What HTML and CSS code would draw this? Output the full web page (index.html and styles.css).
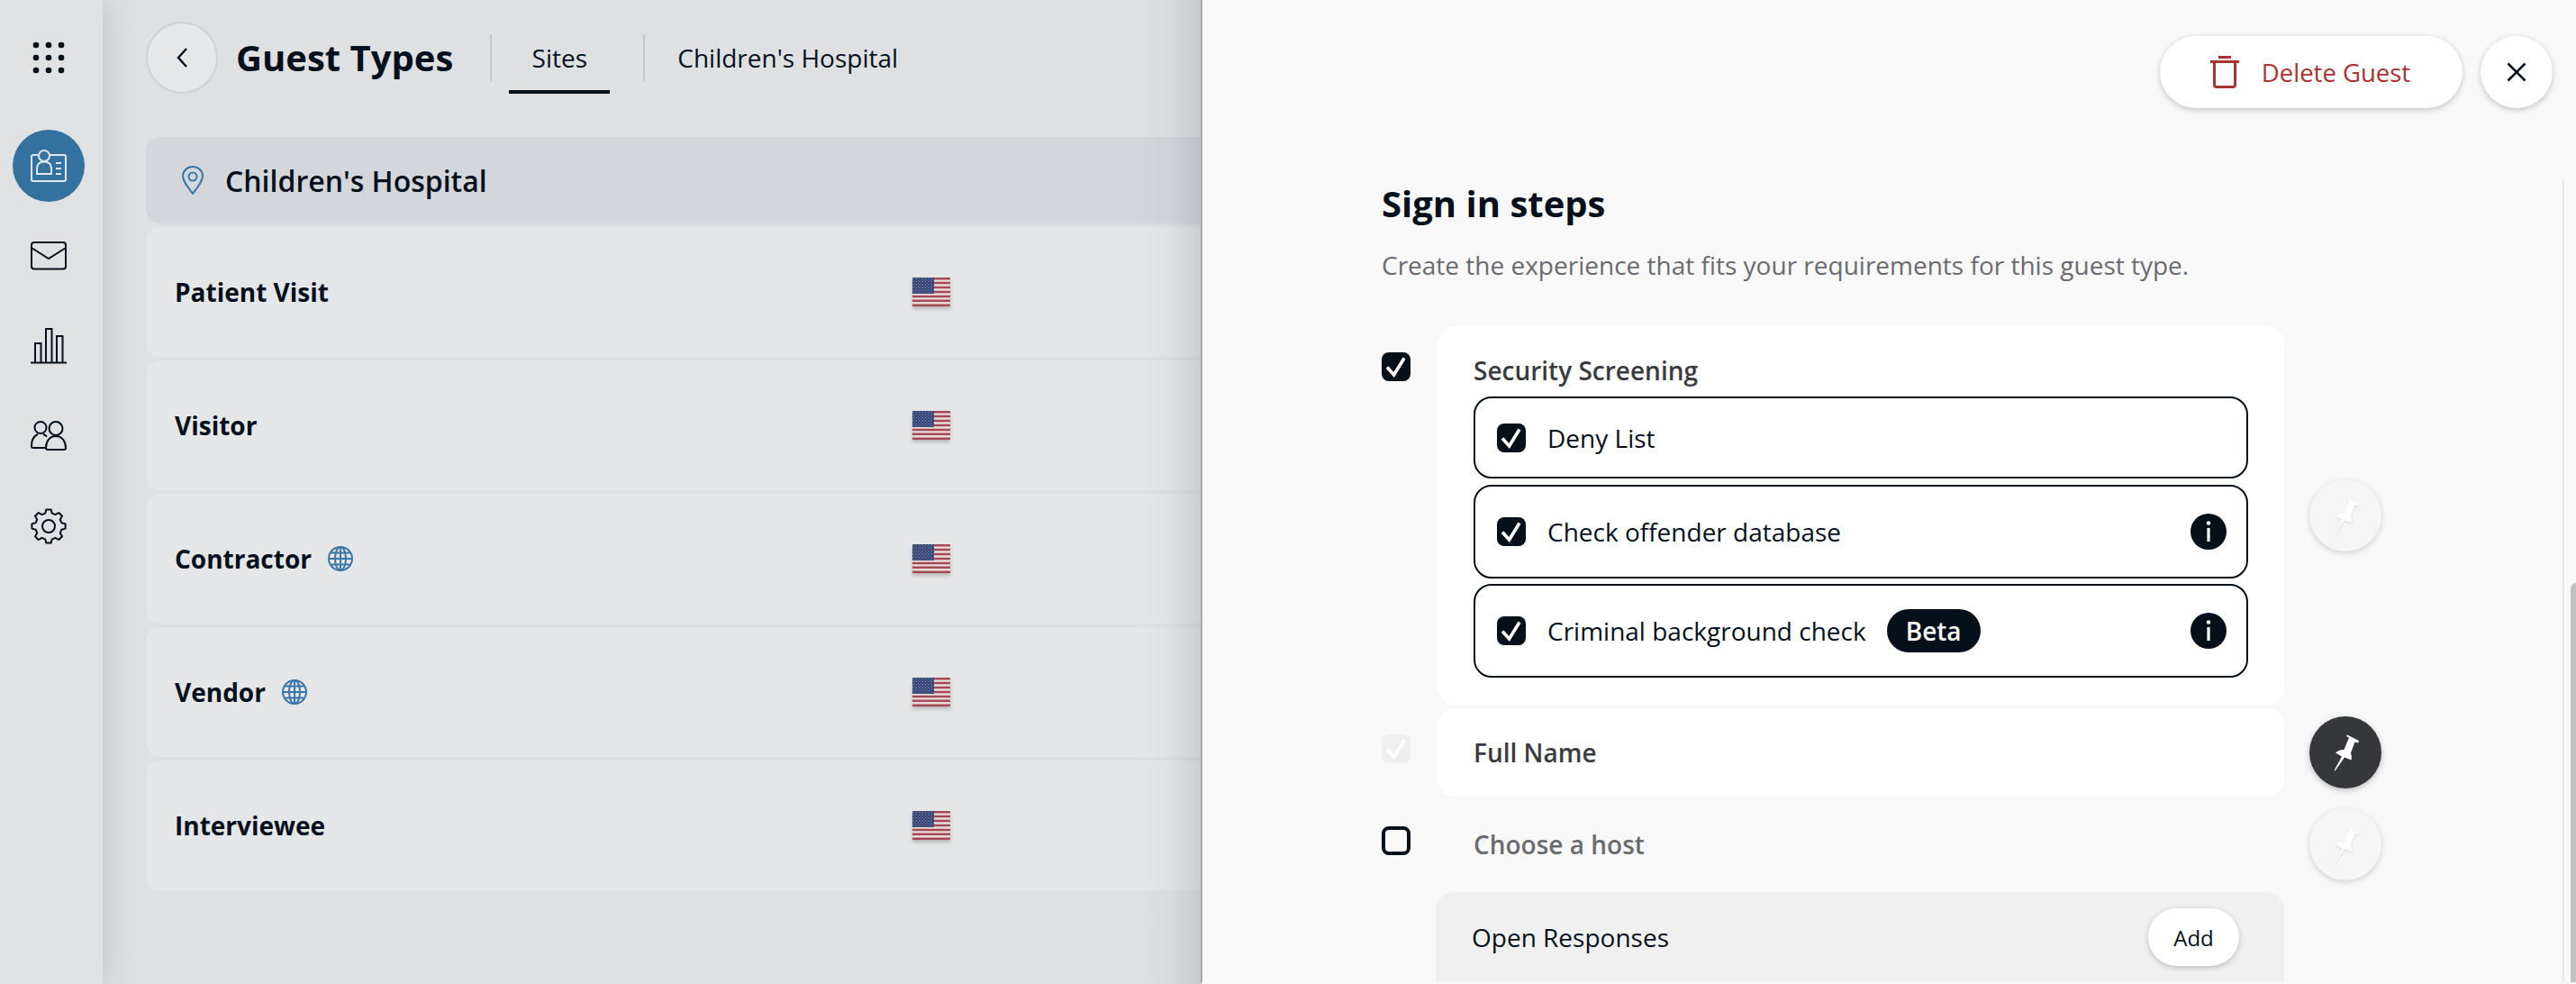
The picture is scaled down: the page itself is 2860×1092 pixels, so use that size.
FILE: index.html
```html
<!DOCTYPE html>
<html>
<head>
    <title>Guest Types</title>
    <link rel="stylesheet" href="styles.css">
</head>
<body>
    <svg class="defs" width="0" height="0">
        <defs>
            <pattern id="stars" width="3.4" height="3.4" patternUnits="userSpaceOnUse">
                <circle cx="1" cy="1" r="0.75" fill="#8f9ac0"/>
                <circle cx="2.7" cy="2.7" r="0.6" fill="#8f9ac0"/>
            </pattern>
            <symbol id="flag" viewBox="0 0 42 32">
                <rect width="42" height="32" fill="#ebdcdc"/>
                <path d="M0 1.2H42M0 6.1H42M0 11H42M0 16H42M0 20.9H42M0 25.8H42M0 30.7H42" stroke="#a44a54" stroke-width="2.5"/>
                <rect width="24" height="18" fill="#2b3a6b"/>
                <rect width="24" height="18" fill="url(#stars)"/>
            </symbol>
            <symbol id="globe" viewBox="0 0 28 28">
                <g fill="none" stroke="#3a76a6" stroke-width="2">
                    <circle cx="14" cy="14" r="13"/>
                    <ellipse cx="14" cy="14" rx="6" ry="13"/>
                    <path d="M14 1V27M1.5 14H26.5M3.5 7.5H24.5M3.5 20.5H24.5"/>
                </g>
            </symbol>
            <symbol id="check" viewBox="0 0 32 32">
                <path d="M6 16.5L13.6 25L25 6.5" fill="none" stroke="#fff" stroke-width="3.6"/>
            </symbol>
            <symbol id="pin" viewBox="0 0 80 80">
                <path d="M42 20.5L55 27L54 29.5L50.5 28.5L46 40.5Q47.5 44.5 46.500 48.500L39 45.500L28.500 60.500L27.600 60L36 44.500L29 40.500Q33 36.500 38.500 37L44 23.500L41 22Z"/>
            </symbol>
            <symbol id="info" viewBox="0 0 40 40">
                <circle cx="20" cy="20" r="20" fill="#06101a"/>
                <circle cx="20" cy="10.5" r="2.2" fill="#fff"/>
                <rect x="18.4" y="16" width="3.2" height="15" fill="#fff"/>
            </symbol>
        </defs>
    </svg>

    <div class="app">
        <nav class="sidebar">
            <div class="nav-item apps">
                <svg width="40" height="40" viewBox="0 0 40 40" fill="#06101a">
                    <circle cx="6" cy="6" r="3.3"/><circle cx="20" cy="6" r="3.3"/><circle cx="34" cy="6" r="3.3"/>
                    <circle cx="6" cy="20" r="3.3"/><circle cx="20" cy="20" r="3.3"/><circle cx="34" cy="20" r="3.3"/>
                    <circle cx="6" cy="34" r="3.3"/><circle cx="20" cy="34" r="3.3"/><circle cx="34" cy="34" r="3.3"/>
                </svg>
            </div>
            <div class="nav-item active">
                <svg width="40" height="40" viewBox="0 0 40 40" fill="none" stroke="#dfe6ec" stroke-width="2">
                    <path d="M8.5 8H3Q1 8 1 10V35Q1 37 3 37H37Q39 37 39 35V10Q39 8 37 8H21.5"/>
                    <circle cx="15" cy="9" r="6"/>
                    <path d="M7 29V23C7 18 10 15.5 15 15.5C20 15.5 23 18 23 23V29Z"/>
                    <path d="M28 17H34M28 23H34M28 29H34"/>
                </svg>
            </div>
            <div class="nav-item">
                <svg width="40" height="40" viewBox="0 0 40 40" fill="none" stroke="#06101a" stroke-width="2">
                    <rect x="1" y="5" width="38" height="29.5" rx="3"/>
                    <path d="M1 11L20 23L39 11"/>
                </svg>
            </div>
            <div class="nav-item">
                <svg width="40" height="40" viewBox="0 0 40 40" fill="none" stroke="#06101a" stroke-width="2">
                    <path d="M0 38.5H40"/>
                    <path d="M5 38V17H11.5V38M17 38V1H23.5V38M29 38V9H35.5V38"/>
                </svg>
            </div>
            <div class="nav-item">
                <svg width="40" height="40" viewBox="0 0 40 40" fill="none" stroke="#06101a" stroke-width="2">
                    <circle cx="11" cy="10.5" r="6.5"/>
                    <circle cx="28" cy="11.5" r="7.5"/>
                    <path d="M16 33H3Q1 33 1 31C1 25 3 20 8 18M14 18C15.5 18.5 17 19.5 18 20.5"/>
                    <path d="M19 35Q17 35 17 33C17 26 21 20 28 20C35 20 39 26 39 33Q39 35 37 35Z"/>
                </svg>
            </div>
            <div class="nav-item">
                <svg width="40" height="40" viewBox="0 0 40 40" fill="none" stroke="#06101a" stroke-width="2" stroke-linejoin="round">
                    <path d="M34.3 16.17L38.6 17.4V22.6L34.3 23.83L32.8 27.4L35 31.3L31.3 35L27.4 32.8L23.83 34.3L22.6 38.6H17.4L16.17 34.3L12.6 32.8L8.7 35L5 31.3L7.2 27.4L5.7 23.83L1.4 22.6V17.4L5.7 16.17L7.2 12.6L5 8.7L8.7 5L12.6 7.2L16.17 5.7L17.4 1.4H22.6L23.83 5.7L27.4 7.2L31.3 5L35 8.7L32.8 12.6Z"/>
                    <circle cx="20" cy="20" r="7"/>
                </svg>
            </div>
        </nav>

        <main class="main">
            <header class="topbar">
                <button class="back-btn">
                    <svg width="14" height="24" viewBox="0 0 14 24" fill="none" stroke="#06101a" stroke-width="2.4"><path d="M12 2L3 12L12 22"/></svg>
                </button>
                <h1 class="page-title">Guest Types</h1>
                <span class="divider"></span>
                <div class="tab">Sites</div>
                <span class="divider second"></span>
                <div class="crumb">Children's Hospital</div>
            </header>

            <section class="site-list">
                <div class="site-head">
                    <svg width="24" height="32" viewBox="0 0 24 32" fill="none" stroke="#3a76a6" stroke-width="2">
                        <path d="M12 31C6 23 1 17 1 11.5C1 5.5 6 1 12 1C18 1 23 5.5 23 11.5C23 17 18 23 12 31Z"/>
                        <circle cx="12" cy="12" r="4.5"/>
                    </svg>
                    <span>Children's Hospital</span>
                </div>
                <div class="guest-row">
                    <div class="guest-name">Patient Visit</div>
                    <svg class="flag"><use href="#flag"/></svg>
                </div>
                <div class="guest-row">
                    <div class="guest-name">Visitor</div>
                    <svg class="flag"><use href="#flag"/></svg>
                </div>
                <div class="guest-row">
                    <div class="guest-name">Contractor <svg class="globe"><use href="#globe"/></svg></div>
                    <svg class="flag"><use href="#flag"/></svg>
                </div>
                <div class="guest-row">
                    <div class="guest-name">Vendor <svg class="globe"><use href="#globe"/></svg></div>
                    <svg class="flag"><use href="#flag"/></svg>
                </div>
                <div class="guest-row">
                    <div class="guest-name">Interviewee</div>
                    <svg class="flag"><use href="#flag"/></svg>
                </div>
            </section>
        </main>

        <aside class="panel">
            <div class="panel-actions">
                <button class="delete-btn">
                    <svg width="32" height="36" viewBox="0 0 32 36" fill="none" stroke="#ab3232" stroke-width="3">
                        <path d="M9 1.5H23M0 6.5H32M4.5 6.5V32Q4.5 34.5 7 34.5H25Q27.5 34.5 27.5 32V6.5"/>
                    </svg>
                    Delete Guest
                </button>
                <button class="close-btn">
                    <svg width="22" height="22" viewBox="0 0 22 22" fill="none" stroke="#06101a" stroke-width="2.6"><path d="M1.5 1.5L20.5 20.5M20.5 1.5L1.5 20.5"/></svg>
                </button>
            </div>

            <div class="panel-body">
                <h2 class="steps-title">Sign in steps</h2>
                <p class="steps-desc">Create the experience that fits your requirements for this guest type.</p>

                <div class="step">
                    <span class="checkbox checked"><svg><use href="#check"/></svg></span>
                    <div class="step-card">
                        <div class="group-title">Security Screening</div>
                        <div class="option short">
                            <span class="checkbox checked"><svg><use href="#check"/></svg></span>
                            <span>Deny List</span>
                        </div>
                        <div class="option gap-a">
                            <span class="checkbox checked"><svg><use href="#check"/></svg></span>
                            <span>Check offender database</span>
                            <svg class="info"><use href="#info"/></svg>
                        </div>
                        <div class="option gap-b">
                            <span class="checkbox checked"><svg><use href="#check"/></svg></span>
                            <span>Criminal background check</span>
                            <span class="badge">Beta</span>
                            <svg class="info"><use href="#info"/></svg>
                        </div>
                    </div>
                    <button class="pin-btn"><svg><use href="#pin"/></svg></button>
                </div>

                <div class="step single">
                    <span class="checkbox disabled"><svg><use href="#check"/></svg></span>
                    <div class="step-card plain">Full Name</div>
                    <button class="pin-btn on"><svg><use href="#pin"/></svg></button>
                </div>

                <div class="step single">
                    <span class="checkbox"></span>
                    <div class="step-card plain off">Choose a host</div>
                    <button class="pin-btn"><svg><use href="#pin"/></svg></button>
                </div>

                <div class="open-card">
                    <span>Open Responses</span>
                    <button class="add-btn">Add</button>
                </div>
            </div>

            <div class="scrollbar"><div class="scroll-thumb"></div></div>
        </aside>
    </div>
</body>
</html>
```

FILE: styles.css
```css
* {
    box-sizing: border-box;
}
body {
    margin: 0;
    font-family: "Open Sans", "Noto Sans", sans-serif;
    color: #06101a;
    background: #dfe0e2;
}
button {
    font-family: inherit;
    border: none;
    padding: 0;
    cursor: pointer;
}
.defs {
    position: absolute;
}
.app {
    position: relative;
    display: flex;
    height: 100vh;
    overflow: hidden;
}

/* left rail */
.sidebar {
    position: relative;
    z-index: 1;
    flex: none;
    width: 114px;
    padding: 24px 6px 0 0;
    display: flex;
    flex-direction: column;
    align-items: center;
    gap: 20px;
    background: #dfe1e3;
    box-shadow: 0 0 36px rgba(60, 70, 85, 0.22);
}
.nav-item {
    width: 80px;
    height: 80px;
    border-radius: 50%;
    display: flex;
    align-items: center;
    justify-content: center;
}
.nav-item.apps {
    margin-bottom: 20px;
}
.nav-item.active {
    background: #33729f;
}

/* page behind the panel */
.main {
    flex: 1;
    min-width: 0;
    padding: 24px 0 0 48px;
}
.topbar {
    display: flex;
    align-items: center;
    height: 80px;
}
.back-btn {
    width: 80px;
    height: 80px;
    border-radius: 50%;
    border: 2px solid #cfd1d4;
    background: #e6e7e9;
    display: flex;
    align-items: center;
    justify-content: center;
}
.page-title {
    margin: 0 41px 0 20px;
    font-size: 40px;
    font-weight: 700;
    line-height: 54px;
}
.divider {
    width: 2px;
    height: 52px;
    background: #c3c5c8;
}
.divider.second {
    margin-left: 37px;
}
.tab {
    margin-left: 19px;
    width: 112px;
    height: 80px;
    border-top: 4px solid transparent;
    border-bottom: 4px solid #06101a;
    display: flex;
    align-items: center;
    justify-content: center;
    font-size: 28px;
}
.crumb {
    margin-left: 36px;
    font-size: 28px;
}
.site-list {
    margin-top: 48px;
    display: flex;
    flex-direction: column;
    gap: 4px;
}
.site-head {
    height: 96px;
    padding-left: 40px;
    display: flex;
    align-items: center;
    gap: 24px;
    background: #d3d6db;
    border-radius: 16px 0 0 16px;
    font-size: 32px;
    font-weight: 600;
}
.guest-row {
    height: 144px;
    display: grid;
    grid-template-columns: 851px auto;
    justify-content: start;
    align-items: center;
    background: #e5e6e8;
    border-radius: 16px 0 0 16px;
}
.guest-name {
    padding-left: 32px;
    display: flex;
    align-items: center;
    gap: 18px;
    font-size: 28px;
    font-weight: 700;
}
.globe {
    width: 28px;
    height: 28px;
}
.flag {
    display: block;
    width: 42px;
    height: 32px;
    box-shadow: 0 3px 4px rgba(0, 0, 0, 0.2);
}

/* slide-over panel */
.panel {
    position: absolute;
    z-index: 2;
    top: 0;
    right: 0;
    bottom: 0;
    width: 1527px;
    overflow: hidden;
    background: #f8f8f8;
    border-left: 2px solid #a9abae;
    border-bottom: 2px solid #f8f8f8;
}
.app::after {
    content: "";
    position: absolute;
    z-index: 1;
    top: 0;
    bottom: 0;
    left: 1263px;
    width: 70px;
    background: linear-gradient(to right, rgba(90, 95, 105, 0), rgba(90, 95, 105, 0.04) 50%, rgba(90, 95, 105, 0.18));
}
.panel-actions {
    padding: 40px 26px 0 0;
    display: flex;
    justify-content: flex-end;
    gap: 20px;
}
.delete-btn {
    width: 336px;
    height: 80px;
    padding-right: 2px;
    border-radius: 40px;
    background: #fff;
    color: #ab3232;
    font-size: 27.5px;
    display: flex;
    align-items: center;
    justify-content: center;
    gap: 25px;
    box-shadow: 0 2px 6px rgba(0, 0, 0, 0.22);
}
.close-btn {
    width: 80px;
    height: 80px;
    border-radius: 50%;
    background: #fff;
    display: flex;
    align-items: center;
    justify-content: center;
    box-shadow: 0 2px 6px rgba(0, 0, 0, 0.22);
}
.panel-body {
    padding-left: 199px;
}
.steps-title {
    margin: 79px 0 0;
    font-size: 40px;
    font-weight: 700;
    line-height: 54px;
}
.steps-desc {
    margin: 21px 0 48px;
    font-size: 28px;
    line-height: 40px;
    color: #6a6b6f;
}
.step {
    display: grid;
    grid-template-columns: 62px 940px 80px;
    column-gap: 0;
    margin-bottom: 4px;
}
.step .pin-btn {
    margin-left: 28px;
    align-self: center;
}
.step > .checkbox {
    margin-top: 29px;
}
.checkbox {
    flex: none;
    display: block;
    width: 32px;
    height: 32px;
    border: 4px solid #06101a;
    border-radius: 8px;
}
.checkbox svg {
    display: block;
    width: 32px;
    height: 32px;
}
.checkbox.checked {
    border: none;
    background: #06101a;
}
.checkbox.disabled {
    border: none;
    background: #efefef;
}
.step-card {
    background: #fff;
    border-radius: 20px;
    padding: 28px 40px 30px;
}
.step-card.plain {
    height: 98px;
    padding: 0 40px;
    display: flex;
    align-items: center;
    font-size: 28px;
    font-weight: 600;
    color: #3a3b40;
}
.step-card.off {
    background: transparent;
    color: #6a6b6f;
}
.group-title {
    font-size: 28px;
    font-weight: 600;
    line-height: 42px;
    margin-bottom: 8px;
    color: #3a3b40;
}
.option {
    height: 104px;
    padding: 0 22px 0 24px;
    display: flex;
    align-items: center;
    gap: 24px;
    border: 2px solid #06101a;
    border-radius: 20px;
    font-size: 28px;
}
.option.short {
    height: 91px;
}
.option.gap-a {
    margin-top: 7px;
}
.option.gap-b {
    margin-top: 6px;
}
.badge {
    margin-left: -1px;
    height: 48px;
    padding: 0 21px;
    display: flex;
    align-items: center;
    border-radius: 24px;
    background: #06101a;
    color: #fff;
    font-weight: 600;
}
.info {
    width: 40px;
    height: 40px;
    margin-left: auto;
}
.pin-btn {
    width: 80px;
    height: 80px;
    border-radius: 50%;
    background: #f6f6f6;
    box-shadow: 0 2px 6px rgba(0, 0, 0, 0.16);
}
.pin-btn svg {
    display: block;
    width: 80px;
    height: 80px;
    fill: #fcfcfc;
    filter: drop-shadow(0 1px 1px rgba(0, 0, 0, 0.12));
}
.pin-btn.on {
    background: #36373b;
    box-shadow: 0 2px 6px rgba(0, 0, 0, 0.25);
}
.pin-btn.on svg {
    fill: #fff;
}
.open-card {
    width: 942px;
    height: 120px;
    margin-left: 60px;
    padding: 18px 50px 38px 40px;
    display: flex;
    align-items: center;
    justify-content: space-between;
    background: #f0f0f0;
    border-radius: 20px;
    font-size: 28px;
}
.add-btn {
    width: 101px;
    height: 64px;
    border-radius: 32px;
    background: #fff;
    color: #06101a;
    font-size: 24px;
    box-shadow: 0 2px 6px rgba(0, 0, 0, 0.22);
}
.scrollbar {
    position: absolute;
    top: 200px;
    right: 0;
    bottom: 0;
    width: 15px;
    padding: 447px 0 0 7px;
    background: #f9f9f9;
    border-left: 2px solid #e9e9e9;
}
.scroll-thumb {
    height: 100%;
    background: #c1c1c1;
    border-radius: 6px 0 0 0;
}
```
